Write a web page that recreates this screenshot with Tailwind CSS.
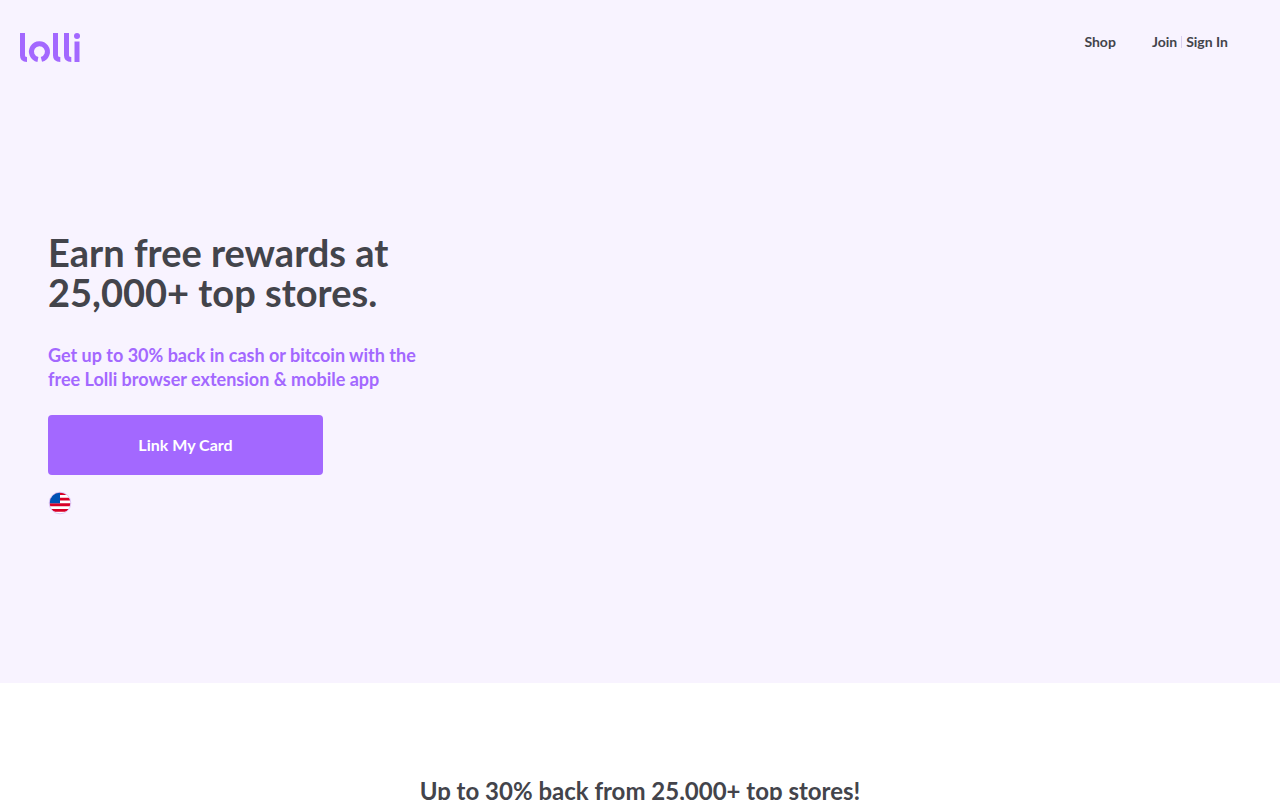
<!DOCTYPE html>
<html lang="en">
<head>
    <meta charset="UTF-8">
    <meta name="viewport" content="width=device-width, initial-scale=1.0">
    <title>Lolli | Earn free rewards</title>

    <!-- Tailwind CSS -->
    <script src="https://cdn.jsdelivr.net/npm/@tailwindcss/browser@4"></script>
</head>
<body class="bg-white text-[#43444b] font-['Lato',sans-serif] font-bold">

    <div class="bg-[#f8f3ff] pb-42">
        <!-- Header -->
        <header class="flex justify-between items-start pt-8 pl-5 pr-13">
            <a href="#" aria-label="Lolli home">
                <svg class="w-15 h-8" viewBox="0 0 60 32" fill="none" stroke="#a368ff" stroke-width="5">
                    <path d="M2.5 1V23.500Q2.500 27.500 7 27.500"/>
                    <path d="M17.900 27.500A8 8 0 1 1 21.400 27.400"/>
                    <path d="M35.500 1V23.500Q35.500 27.500 40.300 27.500"/>
                    <path d="M46.500 1V23.500Q46.500 27.500 51.300 27.500"/>
                    <path d="M57 9.500V30"/>
                    <circle cx="57" cy="4" r="3" fill="#a368ff" stroke="none"/>
                </svg>
            </a>
            <nav class="flex items-center text-sm leading-5">
                <a href="#" class="mr-9">Shop</a>
                <a href="#">Join</a>
                <span class="w-px h-3 ml-1 mr-1 bg-[#d9cff0]"></span>
                <a href="#">Sign In</a>
            </nav>
        </header>

        <!-- Hero -->
        <main class="pt-42 px-12">
            <h1 class="text-[38px] leading-10">Earn free rewards at<br>25,000+ top stores.</h1>
            <p class="mt-[31px] text-lg leading-6 text-[#a368ff]">Get up to 30% back in cash or bitcoin with the<br>free Lolli browser extension &amp; mobile app</p>
            <button type="button" class="block mt-6 w-full max-w-[275px] h-15 rounded bg-[#a368ff] text-white text-base">Link My Card</button>

            <!-- US flag -->
            <svg class="mt-4 size-6" viewBox="0 0 24 24" role="img" aria-label="United States">
                <defs>
                    <clipPath id="flag"><circle cx="12" cy="12" r="10.500"/></clipPath>
                </defs>
                <g clip-path="url(#flag)">
                    <path fill="#fff" d="M0 0h24v24H0z"/>
                    <path fill="#d80027" d="M0 1h24v3H0zM0 6.700h24v2.800H0zM0 12.300h24v2.900H0zM0 18h24v2.800H0z"/>
                    <path fill="#0052b4" d="M0 0h12v12.300H0z"/>
                </g>
                <circle cx="12" cy="12" r="10.800" fill="none" stroke="#d5bcf5" stroke-width=".8"/>
            </svg>
        </main>
    </div>

    <!-- Stores -->
    <section class="pt-23 px-12 text-center">
        <h2 class="text-2xl leading-8">Up to 30% back from 25,000+ top stores!</h2>
    </section>

</body>
</html>
